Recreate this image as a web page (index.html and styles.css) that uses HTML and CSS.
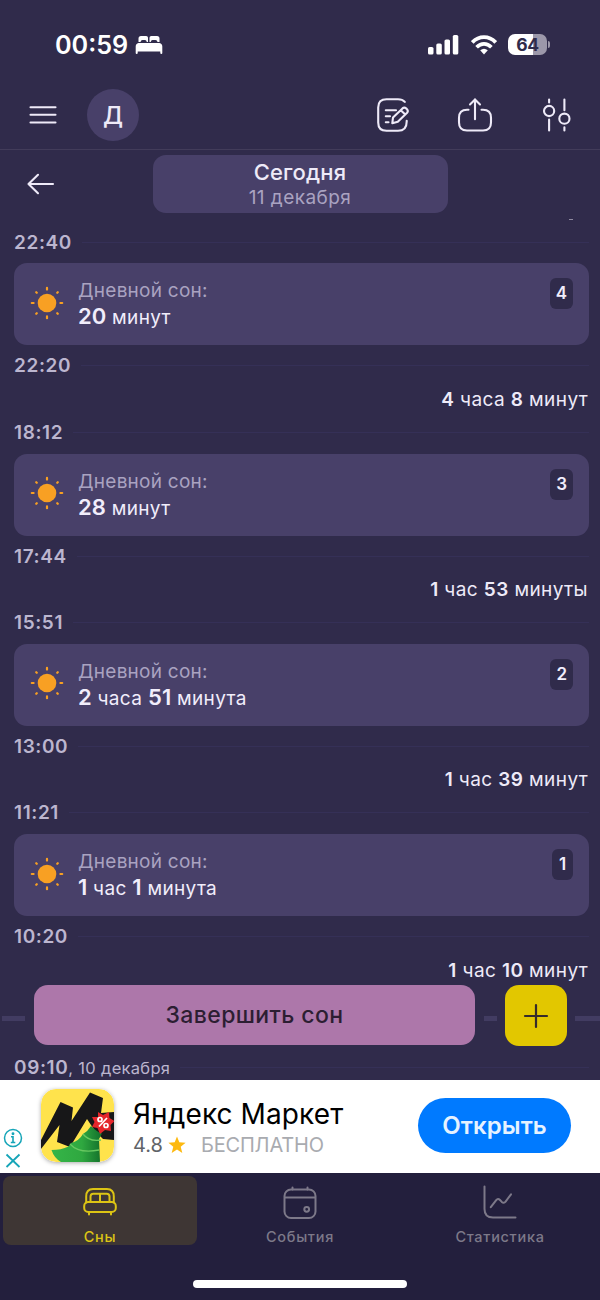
FILE: index.html
```html
<!DOCTYPE html>
<html lang="ru">
<head>
<meta charset="utf-8">
<title>Сны</title>
<link rel="stylesheet" href="styles.css">
</head>
<body>
<svg class="defs" width="0" height="0" aria-hidden="true">
  <symbol id="sun" viewBox="0 0 34 34">
    <circle cx="17" cy="17" r="9.3" fill="#f8a023"/>
    <g stroke="#f8a023" stroke-width="2.2" stroke-linecap="round">
      <path d="M17 1.800v1.800M17 30.400v1.800M1.800 17h1.800M30.400 17h1.800M6.200 6.200l.6.600M27.200 27.200l.6.600M6.200 27.800l.6-.6M27.200 6.800l.6-.6"/>
    </g>
  </symbol>
</svg>
<div class="screen">
  <header class="status">
    <div class="status-left">
      <span class="clock">00:59</span>
      <svg class="bed" width="28" height="20" viewBox="0 0 28 20" fill="#fff">
        <path d="M3.500 7V3.500Q3.500 1 6 1H11.200Q13 1 13 2.800V7H11.800Q11.500 5 10 5H7.500Q5.800 5 5.500 7Z"/>
        <path d="M24.500 7V3.500Q24.500 1 22 1H16.300Q14.500 1 14.500 2.800V7H15.700Q16 5 17.500 5H20.500Q22.200 5 22.500 7Z"/>
        <path d="M3.500 8H24.500Q27.300 8.500 27.300 11.500V18Q27.300 19 26.300 19T25.300 18V16.500H2.700V18Q2.700 19 1.700 19T.7 18V11.500Q.7 8.500 3.500 8Z"/>
      </svg>
    </div>
    <div class="status-right">
      <svg width="31" height="20" viewBox="0 0 31 20" fill="#fff">
        <rect x="0" y="12" width="5.500" height="7.500" rx="1.600"/><rect x="8.300" y="8.500" width="5.500" height="11" rx="1.600"/>
        <rect x="16.500" y="4.500" width="5.500" height="15" rx="1.600"/><rect x="24.800" y="0" width="5.500" height="19.500" rx="1.600"/>
      </svg>
      <svg width="26" height="20" viewBox="0 0 26 20">
        <g fill="none" stroke="#fff" stroke-width="3.700"><path d="M1.300 7.400Q6.300 2.200 13 2.200T24.700 7.400"/><path d="M5.600 12.300Q9 8.900 13 8.900T20.400 12.300"/></g>
        <path d="M9.200 15.300Q13 12.300 16.800 15.300L13 19.500Z" fill="#fff"/>
      </svg>
      <div class="battery"><span class="battery-body">64</span><span class="battery-tip"></span></div>
    </div>
  </header>

  <nav class="toolbar">
    <svg width="28" height="20" viewBox="0 0 28 20" fill="none" stroke="#eeeaf8" stroke-width="2.100" stroke-linecap="round"><path d="M1.500 2.200h25M1.500 9.800h25M1.500 17.500h25"/></svg>
    <div class="avatar">Д</div>
    <div class="tools">
      <svg width="34" height="36" viewBox="0 0 34 36" fill="none" stroke="#eeeaf8" stroke-width="2.100" stroke-linecap="round" stroke-linejoin="round">
        <path d="M28.800 4.900Q26.500 2.200 22 2.200H10.500Q2.200 2.200 2.200 10.500V25.500Q2.200 33.800 10.500 33.800H22Q30.700 33.800 30.700 24.500V23.800"/>
        <path d="M9.800 13.200H20M9.800 19.200H14M9.800 25.200H12.500"/>
        <path d="M17 20.600L26.500 11.400Q28.300 9.900 30.400 11.600Q32.800 13.800 31.100 15.700L21.800 24.800L16.300 26.200ZM24.700 13.200L29.300 17.500"/>
      </svg>
      <svg width="36" height="36" viewBox="0 0 36 36" fill="none" stroke="#eeeaf8" stroke-width="2.100" stroke-linecap="round" stroke-linejoin="round">
        <path d="M18 22.300V2.400M13 7.400L18 2.400L23 7.400"/>
        <path d="M11.500 12.800H10Q2 12.800 2 20.800V25.500Q2 33.500 10 33.500H26Q34 33.500 34 25.500V20.800Q34 12.800 26 12.800H24.500"/>
      </svg>
      <svg width="30" height="36" viewBox="0 0 30 36" fill="none" stroke="#eeeaf8" stroke-width="2.100" stroke-linecap="round">
        <circle cx="7.100" cy="14" r="5.100"/><circle cx="22.400" cy="21.700" r="5.100"/>
        <path d="M7.100 2.500V5.500M7.100 22.500V33.500M22.400 2.500V13.200M22.400 30.200V33.500"/>
      </svg>
    </div>
  </nav>

  <div class="daybar">
    <svg width="28" height="22" viewBox="0 0 28 22" fill="none" stroke="#eeeaf8" stroke-width="2.100" stroke-linecap="round" stroke-linejoin="round"><path d="M26 11H1.500M11 1.800L1.500 11L11 20.200"/></svg>
    <div class="day"><strong>Сегодня</strong><span>11 декабря</span></div>
    <i class="sliver"></i>
  </div>

  <main class="timeline">
    <section class="entry">
      <div class="time"><b>22:40</b><i></i></div>
      <article class="card"><svg width="34" height="34"><use href="#sun"/></svg><div class="nap"><p class="nap-title">Дневной сон:</p><p class="nap-len"><b>20</b> минут</p></div><span class="num">4</span></article>
      <div class="time"><b>22:20</b><i></i></div>
      <p class="awake"><b>4</b> часа <b>8</b> минут</p>
    </section>
    <section class="entry">
      <div class="time"><b>18:12</b><i></i></div>
      <article class="card"><svg width="34" height="34"><use href="#sun"/></svg><div class="nap"><p class="nap-title">Дневной сон:</p><p class="nap-len"><b>28</b> минут</p></div><span class="num">3</span></article>
      <div class="time"><b>17:44</b><i></i></div>
      <p class="awake"><b>1</b> час <b>53</b> минуты</p>
    </section>
    <section class="entry">
      <div class="time"><b>15:51</b><i></i></div>
      <article class="card"><svg width="34" height="34"><use href="#sun"/></svg><div class="nap"><p class="nap-title">Дневной сон:</p><p class="nap-len"><b>2</b> часа <b>51</b> минута</p></div><span class="num">2</span></article>
      <div class="time"><b>13:00</b><i></i></div>
      <p class="awake"><b>1</b> час <b>39</b> минут</p>
    </section>
    <section class="entry">
      <div class="time"><b>11:21</b><i></i></div>
      <article class="card"><svg width="34" height="34"><use href="#sun"/></svg><div class="nap"><p class="nap-title">Дневной сон:</p><p class="nap-len"><b>1</b> час <b>1</b> минута</p></div><span class="num">1</span></article>
      <div class="time"><b>10:20</b><i></i></div>
      <p class="awake"><b>1</b> час <b>10</b> минут</p>
    </section>
    <div class="actions">
      <i class="dash dash-start"></i>
      <button class="finish">Завершить сон</button>
      <i class="dash dash-mid"></i>
      <button class="add"><svg width="26" height="26" viewBox="0 0 26 26" fill="none" stroke="#352b2c" stroke-width="2.200" stroke-linecap="round"><path d="M13 2V24M2 13H24"/></svg></button>
      <i class="dash dash-end"></i>
    </div>
    <div class="time last"><b>09:10</b><span>, 10 декабря</span><i></i></div>
  </main>

  <aside class="ad">
    <div class="ad-marks">
      <svg width="20" height="20" viewBox="0 0 20 20" fill="none" stroke="#16a5b8" stroke-width="1.500"><circle cx="10" cy="10" r="8.500"/><path d="M8 8.700H10V14.500M7.800 14.500H12.300" stroke-width="1.600"/><circle cx="10" cy="5.800" r=".7"/></svg>
      <svg width="20" height="18" viewBox="0 0 20 18" fill="none" stroke="#16a5b8" stroke-width="1.800"><path d="M3.500 2.500L16.500 15M16.500 2.500L3.500 15"/></svg>
    </div>
    <svg class="app" width="73" height="73" viewBox="0 0 73 73">
      <defs>
        <clipPath id="appclip"><rect width="73" height="73" rx="15"/></clipPath>
        <linearGradient id="tree" x1="0" x2="1"><stop offset="0" stop-color="#35b548"/><stop offset=".6" stop-color="#2fa840"/><stop offset="1" stop-color="#126f2b"/></linearGradient>
      </defs>
      <g clip-path="url(#appclip)">
        <rect width="73" height="73" fill="#ffe34c"/>
        <path d="M0 51L19.500 13L32 18.500L30.500 32L49 3.500L62 9L60 24L73 23V51L62 50L54 42L46 30L29 58L16 53L18.500 36L0 60Z" fill="#171718"/>
        <path d="M50 37Q56 43 61 44.500L58 50L59 73H20Q13 69 10.500 61Q20 61 27.500 57.500L30 54Q38 52 42 45Q47 42 50 37Z" fill="url(#tree)"/>
        <path d="M42 45Q48 53 60 51M29 55Q38 65 58 61" fill="none" stroke="#68c861" stroke-width="1.300"/>
        <path d="M57 23L62 26L68 23L68.500 29L73.500 32L69.500 36L70 42L64 41L59 45L56.500 39L51 38L53.500 33L51 28L57 28Z" fill="#e5262b"/>
        <g fill="none" stroke="#fff" stroke-width="1.700"><circle cx="59" cy="30.500" r="2"/><circle cx="65" cy="36.500" r="2"/><path d="M66 29L58 37.500"/></g>
      </g>
    </svg>
    <div class="ad-text">
      <div class="ad-name">Яндекс Маркет</div>
      <div class="ad-meta"><span class="rating">4.8</span><svg width="18" height="18" viewBox="0 0 18 18"><path d="M9 .5L11.300 6.300L17.600 6.700L12.700 10.700L14.300 17L9 13.500L3.700 17L5.300 10.700L.4 6.700L6.700 6.300Z" fill="#fdb910"/></svg><span class="free">БЕСПЛАТНО</span></div>
    </div>
    <button class="open">Открыть</button>
  </aside>

  <footer class="tabs">
    <a class="tab active">
      <svg width="36" height="36" viewBox="0 0 36 36" fill="none" stroke="currentColor" stroke-width="2" stroke-linecap="round" stroke-linejoin="round">
        <path d="M4.200 17.500V11.500Q4.200 4 11 4H25Q31.800 4 31.800 11.500V17.500"/><rect x="2.200" y="17" width="31.600" height="10" rx="4"/>
        <path d="M8.500 17V11.500Q8.500 8.700 11.300 8.700H24.700Q27.500 8.700 27.500 11.500V17M18 8.700V17M7 27.500V29.500M29 27.500V29.500"/>
      </svg><span>Сны</span>
    </a>
    <a class="tab">
      <svg width="36" height="36" viewBox="0 0 36 36" fill="none" stroke="currentColor" stroke-width="2" stroke-linecap="round">
        <rect x="2.500" y="4.500" width="31" height="28.500" rx="6.500"/><path d="M3 12.500H33M10.500 2.500V4.500M25.500 2.500V4.500"/><circle cx="24.700" cy="24.300" r="2.400"/>
      </svg><span>События</span>
    </a>
    <a class="tab">
      <svg width="36" height="36" viewBox="0 0 36 36" fill="none" stroke="currentColor" stroke-width="2" stroke-linecap="round" stroke-linejoin="round">
        <path d="M2.500 1.500V24Q2.500 32.500 11 32.500H33.500M8.800 22.200L14.200 15.100Q15.900 13 18 15L19.800 16.900Q21.800 18.800 23.600 16.600L29 9.300"/>
      </svg><span>Статистика</span>
    </a>
  </footer>
  <div class="home"><i></i></div>
</div>
</body>
</html>
```
FILE: styles.css
```css
* { box-sizing: border-box; }
body { margin: 0; background: #302b4b; font-family: Inter, "Liberation Sans", sans-serif; }
p { margin: 0; }
svg { display: block; flex: none; }
button { border: 0; padding: 0; font: inherit; }
.defs { position: absolute; }
.screen { width: 600px; height: 1300px; overflow: hidden; display: flex; flex-direction: column; background: #302b4b; }
.screen > * { flex: none; }

.status { height: 80px; padding: 9px 50px 0 55px; display: flex; justify-content: space-between; align-items: center; }
.status-left { display: flex; align-items: center; gap: 7px; color: #fff; }
.clock { font-size: 25.200px; font-weight: 600; line-height: 30px; width: 73px; white-space: nowrap; }
.status-right { display: flex; align-items: center; gap: 11px; }
.status-right > svg:first-child { margin-right: 1px; }
.battery { display: flex; align-items: center; gap: 1px; }
.battery-body { width: 39px; height: 21px; border-radius: 7px; background: linear-gradient(90deg, #fff 64%, #9c98aa 64%); color: #302b4b; font-size: 17.500px; font-weight: 700; line-height: 21px; text-align: center; letter-spacing: -.4px; }
.battery-tip { width: 2px; height: 7px; border-radius: 0 3px 3px 0; background: #9c98aa; }

.toolbar { height: 70px; padding: 0 28px 0 29px; display: flex; align-items: center; border-bottom: 1px solid #423c5a; }
.avatar { width: 52px; height: 52px; margin-left: 30px; border-radius: 50%; background: #484069; color: #eeeaf8; font-size: 24px; font-weight: 500; line-height: 54px; text-align: center; }
.tools { margin-left: auto; display: flex; align-items: center; gap: 47px; }
.tools svg:nth-child(2) { margin-right: 2px; }

.daybar { position: relative; height: 70px; padding: 5px 0 0 27px; display: flex; align-items: flex-start; }
.daybar > svg { margin-top: 18px; }
.day { width: 295px; height: 58px; margin-left: 97.500px; border-radius: 13px; background: #484069; display: flex; flex-direction: column; align-items: center; }
.day strong { font-size: 22px; line-height: 28px; margin-top: 3px; font-weight: 500; color: #eeeaf8; letter-spacing: .2px; }
.day span { font-size: 19px; line-height: 24px; color: #aaa3c1; letter-spacing: .45px; }
.sliver { position: absolute; left: 569px; top: 69px; width: 4px; height: 1px; background: #8f8aa0; }

.timeline { height: 860px; padding-top: 10px; overflow: hidden; }
.entry { height: 190.250px; }
.time { height: 24px; padding: 0 11px 0 14px; display: flex; align-items: center; color: #bcb6cf; font-size: 19px; letter-spacing: .6px; }
.time b { font-weight: 600; }
.time i { flex: 1; height: 1px; margin-left: 10px; background: #37325a; opacity: .8; }
.card { height: 82px; margin: 9.400px 11px 8.600px 14px; padding: 0 16px; border-radius: 13px; background: #484069; display: flex; align-items: center; }
.card > svg { margin-top: -3px; }
.nap { margin-left: 14px; flex: 1; }
.nap-title { font-size: 19px; line-height: 26px; padding-top: 1px; color: #aaa3c1; letter-spacing: .25px; }
.nap-len { font-size: 19px; line-height: 26px; margin-top: -1px; color: #f1edfb; letter-spacing: .35px; }
.nap-len b { font-size: 22px; font-weight: 600; letter-spacing: .1px; }
.num { align-self: flex-start; margin-top: 15px; min-width: 21px; height: 31px; padding: 0 6px; border-radius: 6px; background: #302b4b; color: #f1edfb; font-size: 17px; line-height: 30px; font-weight: 600; text-align: center; }
.awake { height: 42.250px; padding-right: 12px; text-align: right; font-size: 19px; line-height: 44px; color: #eeeaf8; letter-spacing: .4px; }
.awake b { font-weight: 600; }
.actions { position: relative; height: 70px; margin-top: -6px; display: flex; align-items: flex-start; padding-left: 2px; }
.actions > * { flex: none; }
.dash { height: 5px; margin-top: 31px; background: #423c62; }
.dash-start { width: 23px; }
.dash-mid { width: 13px; margin-left: 9px; }
.dash-end { width: 25px; margin-left: 8px; }
.finish { width: 441px; height: 60px; margin-left: 9px; border-radius: 14px; background: #ad77aa; color: #2c1e32; font-size: 23px; font-weight: 500; letter-spacing: .4px; }
.add { width: 62px; height: 61px; margin-left: 8px; border-radius: 14px; background: #e2c700; display: flex; align-items: center; justify-content: center; }
.last span { font-size: 16.500px; letter-spacing: .3px; padding-top: 1px; }

.ad { height: 93px; background: #fff; display: flex; align-items: flex-start; padding: 0 29px 0 3px; }
.ad-marks { margin-top: 48px; display: flex; flex-direction: column; gap: 4px; }
.app { margin: 9px 0 0 18px; border-radius: 15px; box-shadow: 0 1px 4px #aaa; }
.ad-text { margin: 17px 0 0 19px; }
.ad-name { color: #000; font-size: 28px; line-height: 35px; letter-spacing: .1px; white-space: nowrap; }
.ad-meta { display: flex; align-items: center; height: 26px; font-size: 20px; }
.rating { color: #606368; width: 35px; }
.free { margin-left: 15px; color: #a9abb0; letter-spacing: -.2px; }
.open { width: 153px; height: 55px; margin: 18px 0 0 auto; border-radius: 28px; background: #007aff; color: #e6f2ff; font-size: 24px; font-weight: 600; letter-spacing: .1px; }

.tabs { height: 75px; padding: 3px; display: grid; grid-template-columns: 194px 1fr 194px; gap: 6px; background: #231f3d; }
.tab { height: 69px; padding-top: 9px; border-radius: 8px; display: flex; flex-direction: column; align-items: center; color: #7d7989; font-size: 14.500px; letter-spacing: .7px; line-height: 18px; font-weight: 500; }
.tab span { margin-top: 7px; }
.tab.active { background: #3e3634; color: #dcc414; }
.home { height: 52px; background: #231f3d; display: flex; justify-content: center; padding-top: 32px; }
.home i { width: 214px; height: 8px; border-radius: 4px; background: #fff; }
```
